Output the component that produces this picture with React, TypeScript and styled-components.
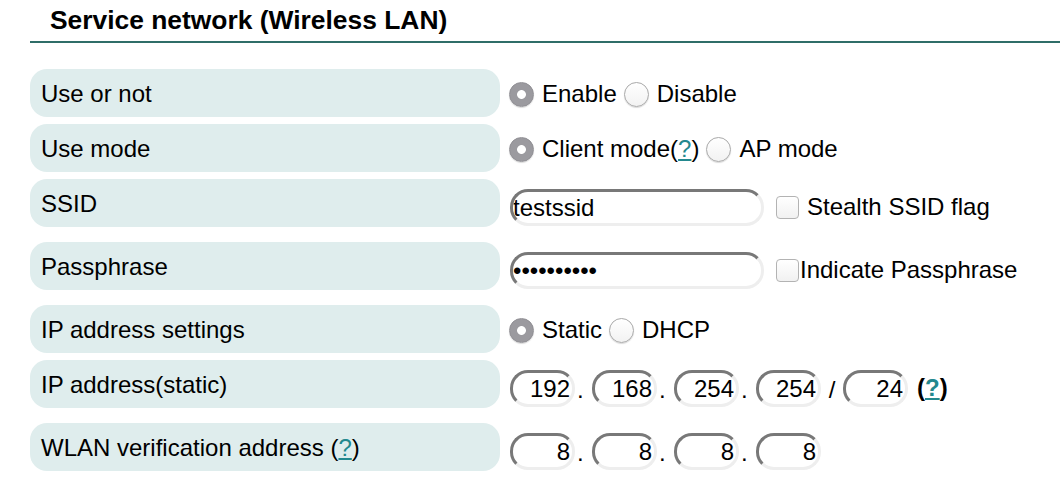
import React from "react";
import styled, { createGlobalStyle } from "styled-components";

const Global = createGlobalStyle`
  html, body { margin: 0; padding: 0; background: #fff; }
  body { font-family: "Liberation Sans", Arial, Helvetica, sans-serif; color: #000; }
`;

const Page = styled.div`
  width: 1060px;
  height: 480px;
  overflow: hidden;
  box-sizing: border-box;
  padding-left: 30px;
`;

const Heading = styled.h2`
  margin: 0;
  padding: 5px 0 6px 20px;
  font-size: 26.4px;
  line-height: 30px;
  font-weight: bold;
  border-bottom: 2px solid #2f6d68;
`;

const Rows = styled.div`
  display: flex;
  flex-direction: column;
  gap: 7px;
  margin-top: 26px;
`;

const Row = styled.div<{ $tall?: boolean }>`
  display: flex;
  align-items: flex-start;
  height: ${(p) => (p.$tall ? 56 : 48)}px;
`;

const Label = styled.div`
  flex: none;
  width: 470px;
  height: 48px;
  box-sizing: border-box;
  padding: 2px 0 0 11px;
  display: flex;
  align-items: center;
  background: #dfeded;
  border-radius: 17px;
  font-size: 24px;
`;

const Value = styled.div<{ $pad?: number }>`
  height: 100%;
  display: flex;
  align-items: center;
  padding-left: ${(p) => p.$pad ?? 9}px;
  font-size: 24px;
`;

const OptionGroup = styled.div`
  display: flex;
  align-items: center;
  gap: 7px;
  padding-top: 2px;
`;

const Option = styled.label`
  display: flex;
  align-items: center;
  gap: 8px;
  white-space: nowrap;
`;

const Radio = styled.input.attrs({ type: "radio" })`
  appearance: none;
  margin: 0;
  flex: none;
  width: 25px;
  height: 25px;
  box-sizing: border-box;
  border-radius: 50%;
  border: 1px solid #a9a9a9;
  background: linear-gradient(#ffffff, #f2f2f2);
  box-shadow: 0 1px 1px rgba(0, 0, 0, 0.15);
  &:checked {
    border-color: #8f8e93;
    background: radial-gradient(circle, #ffffff 0 4px, #9b9a9f 4.8px);
  }
`;

const Help = styled.a`
  color: #23888e;
  text-decoration: underline;
  text-decoration-thickness: 2px;
  text-underline-offset: 2px;
`;

const HelpNote = styled.span<{ $bold?: boolean }>`
  font-weight: ${(p) => (p.$bold ? "bold" : "normal")};
  margin-left: ${(p) => (p.$bold ? 9 : 0)}px;
`;

const Field = styled.input<{ $w: number; $right?: boolean }>`
  box-sizing: border-box;
  width: ${(p) => p.$w}px;
  height: 37px;
  margin: 0;
  flex: none;
  border-radius: 18px;
  border: 3px solid #eeeeee;
  border-top-color: #787878;
  border-left-color: #787878;
  padding: 2px ${(p) => (p.$right ? 2 : 0)}px 0 0;
  background: #fff;
  color: #000;
  font: 24px "Liberation Sans", Arial, Helvetica, sans-serif;
  text-align: ${(p) => (p.$right ? "right" : "left")};
  outline: none;
`;

const CheckLabel = styled.label<{ $gap: number }>`
  display: flex;
  align-items: center;
  gap: ${(p) => p.$gap}px;
  margin-left: 12px;
  white-space: nowrap;
`;

const Checkbox = styled.input.attrs({ type: "checkbox" })`
  appearance: none;
  margin: 0;
  flex: none;
  width: 23px;
  height: 23px;
  box-sizing: border-box;
  border: 1px solid #b3b3b3;
  border-radius: 4px;
  background: linear-gradient(#ffffff, #f1f1f1);
`;

const Sep = styled.span<{ $w: number; $center?: boolean }>`
  flex: none;
  width: ${(p) => p.$w}px;
  box-sizing: border-box;
  padding: 4px 0 0 ${(p) => (p.$center ? 0 : 2)}px;
  text-align: ${(p) => (p.$center ? "center" : "left")};
`;

const noop = () => {};

function Octets({ values, prefix }: { values: string[]; prefix: string }) {
  return (
    <>
      {values.map((v, i) => (
        <React.Fragment key={prefix + i}>
          {i > 0 && <Sep $w={17}>.</Sep>}
          <Field $w={65} $right value={v} onChange={noop} />
        </React.Fragment>
      ))}
    </>
  );
}

export default function App() {
  return (
    <Page>
      <Global />
      <Heading>Service network (Wireless LAN)</Heading>
      <Rows>
        <Row>
          <Label>Use or not</Label>
          <Value>
            <OptionGroup>
              <Option>
                <Radio name="use" defaultChecked />
                Enable
              </Option>
              <Option>
                <Radio name="use" />
                Disable
              </Option>
            </OptionGroup>
          </Value>
        </Row>
        <Row>
          <Label>Use mode</Label>
          <Value>
            <OptionGroup>
              <Option>
                <Radio name="mode" defaultChecked />
                <span>
                  Client mode(<Help href="#">?</Help>)
                </span>
              </Option>
              <Option>
                <Radio name="mode" />
                AP mode
              </Option>
            </OptionGroup>
          </Value>
        </Row>
        <Row $tall>
          <Label>SSID</Label>
          <Value $pad={10}>
            <Field $w={254} value="testssid" onChange={noop} />
            <CheckLabel $gap={8}>
              <Checkbox />
              Stealth SSID flag
            </CheckLabel>
          </Value>
        </Row>
        <Row $tall>
          <Label>Passphrase</Label>
          <Value $pad={10}>
            <Field $w={254} type="password" value="abcdefghij" onChange={noop} />
            <CheckLabel $gap={1}>
              <Checkbox />
              Indicate Passphrase
            </CheckLabel>
          </Value>
        </Row>
        <Row>
          <Label>IP address settings</Label>
          <Value>
            <OptionGroup>
              <Option>
                <Radio name="ip" defaultChecked />
                Static
              </Option>
              <Option>
                <Radio name="ip" />
                DHCP
              </Option>
            </OptionGroup>
          </Value>
        </Row>
        <Row $tall>
          <Label>IP address(static)</Label>
          <Value $pad={10}>
            <Octets prefix="ip" values={["192", "168", "254", "254"]} />
            <Sep $w={22} $center>
              /
            </Sep>
            <Field $w={65} $right value="24" onChange={noop} />
            <HelpNote $bold>
              (<Help href="#">?</Help>)
            </HelpNote>
          </Value>
        </Row>
        <Row $tall>
          <Label>
            <HelpNote>
              WLAN verification address (<Help href="#">?</Help>)
            </HelpNote>
          </Label>
          <Value $pad={10}>
            <Octets prefix="wl" values={["8", "8", "8", "8"]} />
          </Value>
        </Row>
      </Rows>
    </Page>
  );
}
